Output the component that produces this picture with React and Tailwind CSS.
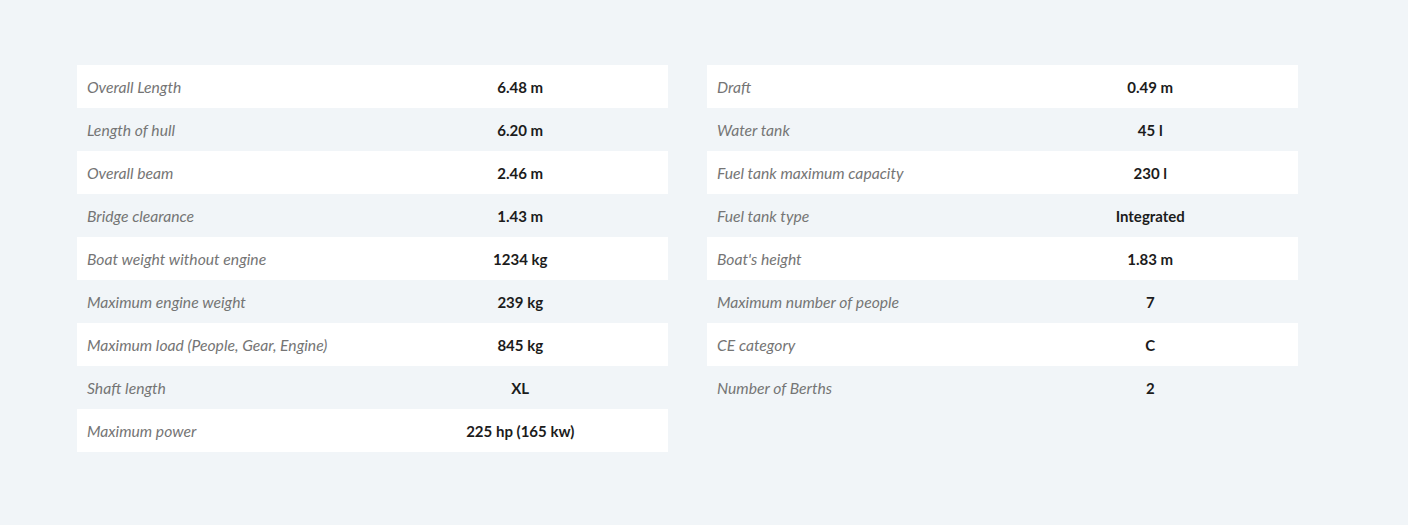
import React from 'react';

const LEFT = [
  ['Overall Length', '6.48 m'],
  ['Length of hull', '6.20 m'],
  ['Overall beam', '2.46 m'],
  ['Bridge clearance', '1.43 m'],
  ['Boat weight without engine', '1234 kg'],
  ['Maximum engine weight', '239 kg'],
  ['Maximum load (People, Gear, Engine)', '845 kg'],
  ['Shaft length', 'XL'],
  ['Maximum power', '225 hp (165 kw)'],
];

const RIGHT = [
  ['Draft', '0.49 m'],
  ['Water tank', '45 l'],
  ['Fuel tank maximum capacity', '230 l'],
  ['Fuel tank type', 'Integrated'],
  ["Boat's height", '1.83 m'],
  ['Maximum number of people', '7'],
  ['CE category', 'C'],
  ['Number of Berths', '2'],
];

const SpecTable = ({ rows }) => (
  <div className="flex flex-col">
    {rows.map(([label, value], i) => (
      <div
        key={label}
        className={`grid grid-cols-2 h-[43px] items-center pt-[2px] ${i % 2 === 0 ? 'bg-white' : ''}`}
      >
        <div className="pl-[10px] italic text-[15.7px] text-[#757575]">{label}</div>
        <div className="text-center font-bold text-[15px] text-[#1c1c1c]">{value}</div>
      </div>
    ))}
  </div>
);

export default function App() {
  return (
    <div
      className="min-h-[525px] bg-[#f1f5f8] pt-[65px] pl-[77px] pr-[110px]"
      style={{ fontFamily: 'Lato, "Open Sans", sans-serif' }}
    >
      <div className="grid grid-cols-2 gap-[39px]">
        <SpecTable rows={LEFT} />
        <SpecTable rows={RIGHT} />
      </div>
    </div>
  );
}
